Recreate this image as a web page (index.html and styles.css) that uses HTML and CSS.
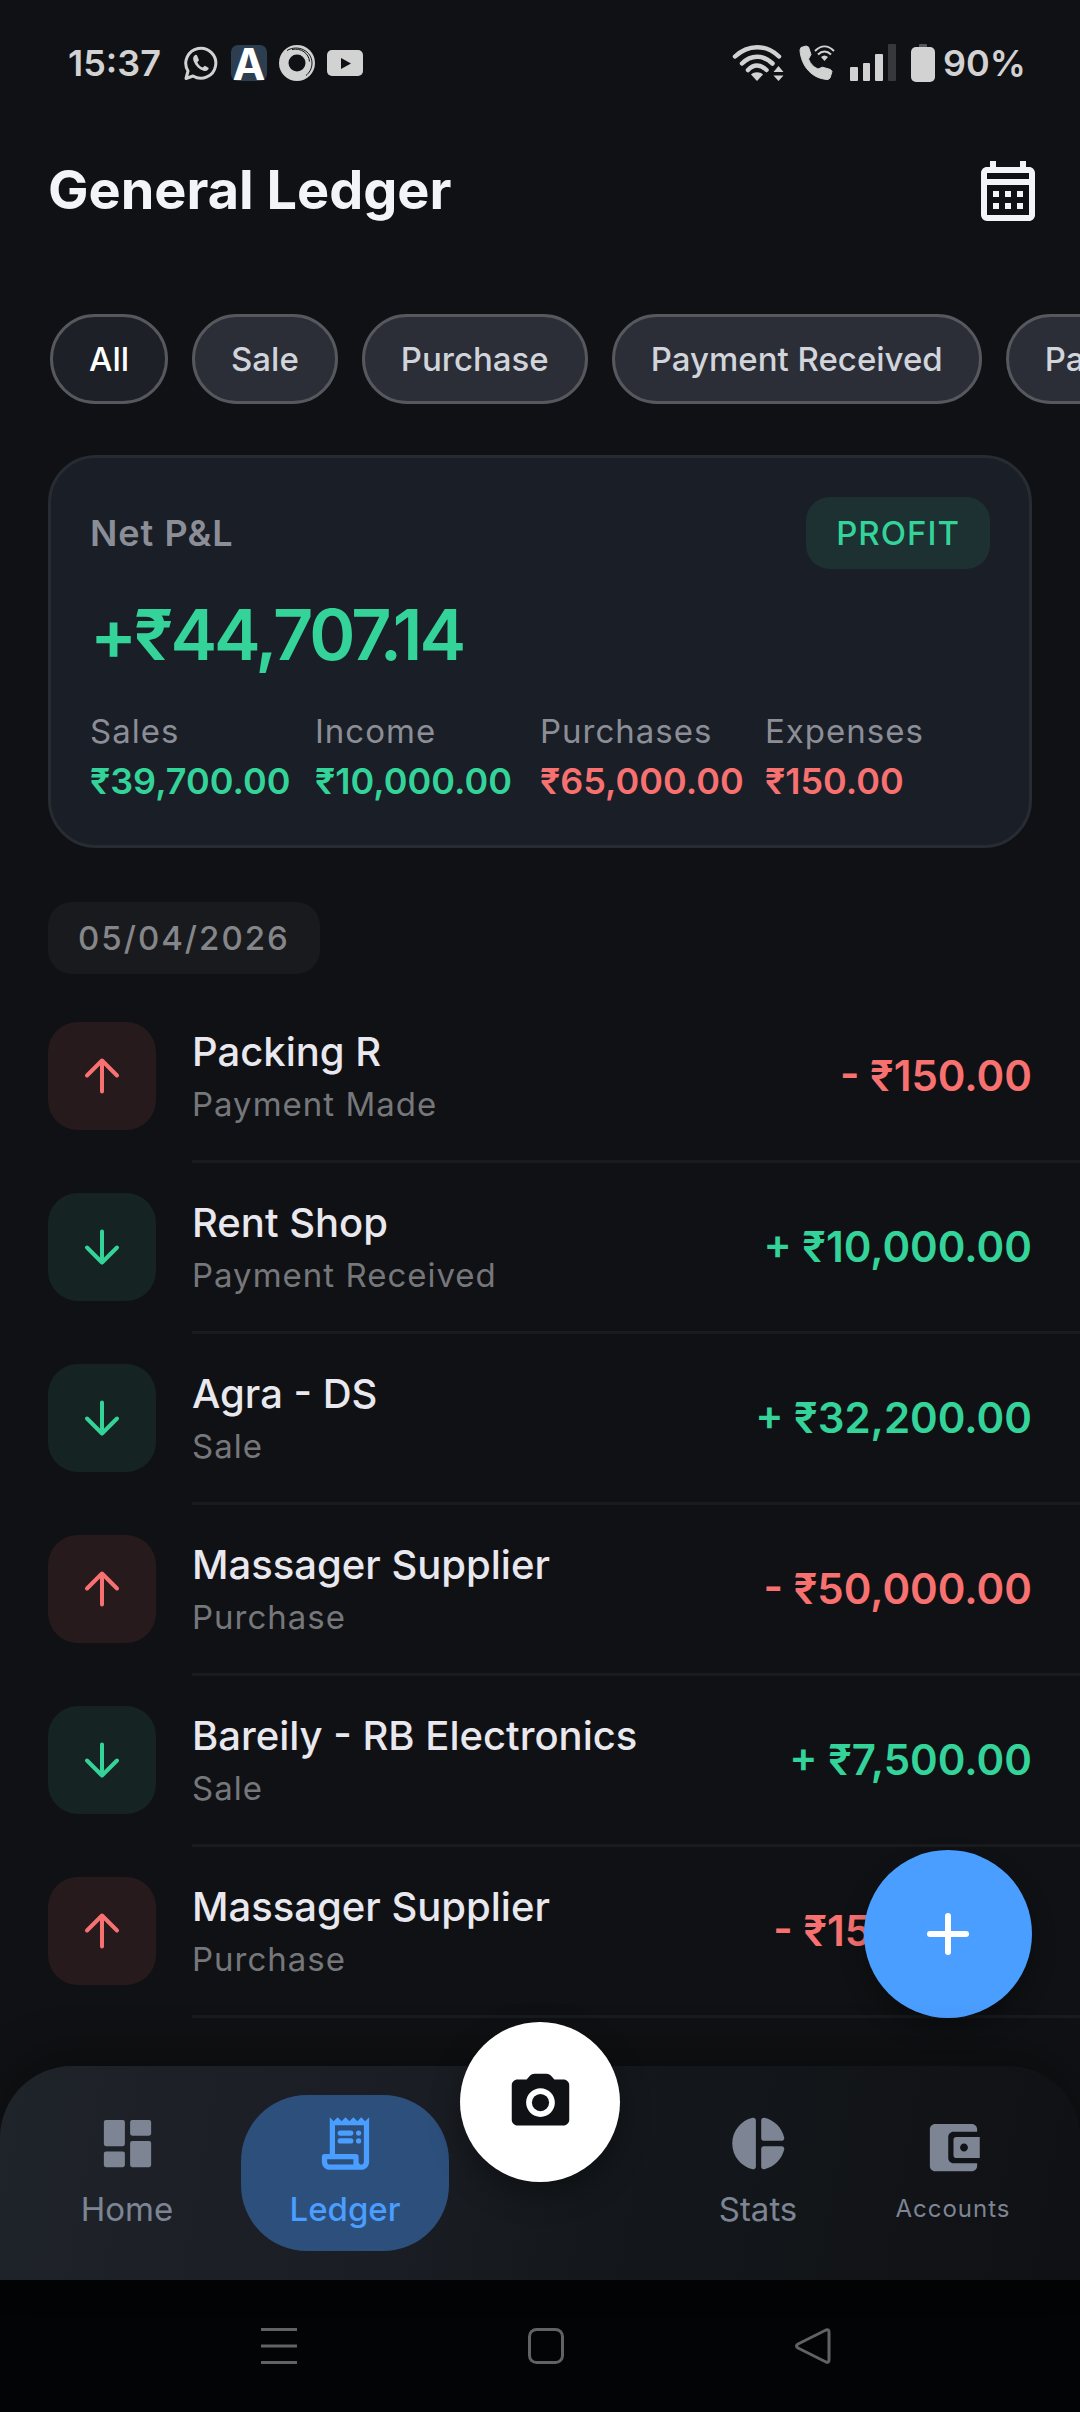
FILE: index.html
```html
<!DOCTYPE html>
<html lang="en">
<head>
<meta charset="utf-8">
<meta name="viewport" content="width=device-width, initial-scale=1">
<title>General Ledger</title>
<link rel="stylesheet" href="styles.css">
</head>
<body>
<svg class="defs" width="0" height="0" aria-hidden="true">
  <symbol id="arrow-up" viewBox="0 0 48 48"><path d="M24 39.500V8.500M9 23.500l15-15 15 15" fill="none" stroke="currentColor" stroke-width="4" stroke-linecap="round" stroke-linejoin="round"/></symbol>
  <symbol id="arrow-down" viewBox="0 0 48 48"><path d="M24 8.500v31M9 24.500l15 15 15-15" fill="none" stroke="currentColor" stroke-width="4" stroke-linecap="round" stroke-linejoin="round"/></symbol>
</svg>
<div class="app">
  <div class="status">
    <span class="clock">15:37</span>
    <div class="status-left">
      <svg width="36" height="36" viewBox="0 0 36 36" fill="none"><path d="M3 33.500l2-7.500A15 15 0 1 1 10 31z" stroke="#d2d2d2" stroke-width="3" stroke-linejoin="round"/><path d="M12.200 10c-2 1.200-2.500 3.400-1.700 5.800 1.800 5 5.200 8.400 10 10 2.600.8 4.700-.3 5.300-2.700l-3.900-2.400-2.300 1.900c-2.400-1-4.200-2.800-5.300-5.300l1.700-2.100-1.800-4.500c-.3-.8-1.200-1.100-2-.7z" fill="#d2d2d2"/></svg>
      <svg class="app-icon" width="36" height="36" viewBox="0 0 36 36"><rect width="36" height="36" rx="7" fill="#2c3e50"/><text class="app-mark" x="18" y="35" text-anchor="middle">A</text></svg>
      <svg width="36" height="36" viewBox="0 0 36 36"><circle cx="18" cy="18" r="18" fill="#d2d2d2"/><circle cx="18" cy="18" r="8.500" fill="#101114"/><path d="M8 5.500C19-1 33 6 33 18c0 6-3 10-6 12.500M13 4.500c9-2 17 4 17.500 12" fill="none" stroke="#101114" stroke-width="1"/></svg>
      <svg width="36" height="26" viewBox="0 0 36 26"><rect width="36" height="26" rx="5" fill="#d2d2d2"/><path d="M14 8v11l10-5.500z" fill="#101114"/></svg>
    </div>
    <div class="status-right">
      <svg width="52" height="38" viewBox="0 0 52 38" fill="none" stroke="#d2d2d2" stroke-width="4.500" stroke-linecap="round"><path d="M3 12.500c13-12.500 31-12.500 44 0M10 19.500c9-9 21-9 30.500 0M16 26c5.500-6 12.500-6 18.500 0"/><path d="M19 30.500c3-3 9-3 12 0L25 37z" fill="#d2d2d2" stroke="none"/><path d="M46.500 22l5 6h-10zM46.500 37l5-5.500h-10z" fill="#d2d2d2" stroke="none"/></svg>
      <svg width="36" height="36" viewBox="0 0 36 36" fill="none"><path d="M2 2.500 7 1l2.500 1L12 9.500 9.500 14c2 5 5 8 9.500 10l4.500-1.800 8 2.300 1.500 2-2 6.500-2 1.500C13 34 2 21 1 5z" fill="#d2d2d2" stroke="#d2d2d2" stroke-linejoin="round"/><path d="M16 6c6-6 13-6 19 0M19 9.500c4-4 9-4 13 0" stroke="#d2d2d2" stroke-width="2"/><path d="M22 12q3.500-3 7 0l-3.500 4z" fill="#d2d2d2"/></svg>
      <svg width="46" height="37" viewBox="0 0 46 37" fill="#d2d2d2"><rect y="23" width="8" height="14" rx="1"/><rect x="13" y="19" width="7" height="18" rx="1"/><rect x="25" y="10" width="8" height="27" rx="1"/><rect x="38" width="8" height="37" rx="1" fill="#37383b"/></svg>
      <div class="battery">
        <svg width="24" height="38" viewBox="0 0 24 38"><path d="M8 3V1q0-1 1-1h6q1 0 1 1v2z" fill="#55565a"/><rect y="3" width="24" height="35" rx="5" fill="#d2d2d2"/></svg>
        <span class="percent">90%</span>
      </div>
    </div>
  </div>

  <header class="header">
    <h1 class="title">General Ledger</h1>
    <button class="icon-button" type="button" aria-label="Calendar">
      <svg width="72" height="72" viewBox="0 0 24 24" fill="currentColor"><path d="M19 4h-1V2h-2v2H8V2H6v2H5c-1.110 0-1.990.9-1.990 2L3 20a2 2 0 0 0 2 2h14c1.100 0 2-.9 2-2V6c0-1.100-.9-2-2-2zm0 16H5V10h14v10zm0-12H5V6h14v2zM9 14H7v-2h2v2zm4 0h-2v-2h2v2zm4 0h-2v-2h2v2zm-8 4H7v-2h2v2zm4 0h-2v-2h2v2zm4 0h-2v-2h2v2z"/></svg>
    </button>
  </header>

  <div class="chips">
    <button class="chip chip-active" type="button">All</button>
    <button class="chip" type="button">Sale</button>
    <button class="chip" type="button">Purchase</button>
    <button class="chip" type="button">Payment Received</button>
    <button class="chip" type="button">Payment Made</button>
  </div>

  <section class="card">
    <div class="card-top">
      <h2 class="card-title">Net P&amp;L</h2>
      <span class="badge">PROFIT</span>
    </div>
    <p class="net gain">+₹44,707.14</p>
    <dl class="totals">
      <div><dt>Sales</dt><dd class="gain">₹39,700.00</dd></div>
      <div><dt>Income</dt><dd class="gain">₹10,000.00</dd></div>
      <div><dt>Purchases</dt><dd class="loss">₹65,000.00</dd></div>
      <div><dt>Expenses</dt><dd class="loss">₹150.00</dd></div>
    </dl>
  </section>

  <main class="ledger">
    <h2 class="date">05/04/2026</h2>
    <ul class="entries">
      <li class="entry"><span class="tile tile-loss"><svg width="48" height="48"><use href="#arrow-up"/></svg></span><div class="entry-body"><div class="entry-text"><span class="name">Packing R</span><span class="kind">Payment Made</span></div><span class="amount loss">- ₹150.00</span></div></li>
      <li class="entry"><span class="tile tile-gain"><svg width="48" height="48"><use href="#arrow-down"/></svg></span><div class="entry-body"><div class="entry-text"><span class="name">Rent Shop</span><span class="kind">Payment Received</span></div><span class="amount gain">+ ₹10,000.00</span></div></li>
      <li class="entry"><span class="tile tile-gain"><svg width="48" height="48"><use href="#arrow-down"/></svg></span><div class="entry-body"><div class="entry-text"><span class="name">Agra - DS</span><span class="kind">Sale</span></div><span class="amount gain">+ ₹32,200.00</span></div></li>
      <li class="entry"><span class="tile tile-loss"><svg width="48" height="48"><use href="#arrow-up"/></svg></span><div class="entry-body"><div class="entry-text"><span class="name">Massager Supplier</span><span class="kind">Purchase</span></div><span class="amount loss">- ₹50,000.00</span></div></li>
      <li class="entry"><span class="tile tile-gain"><svg width="48" height="48"><use href="#arrow-down"/></svg></span><div class="entry-body"><div class="entry-text"><span class="name">Bareily - RB Electronics</span><span class="kind">Sale</span></div><span class="amount gain">+ ₹7,500.00</span></div></li>
      <li class="entry"><span class="tile tile-loss"><svg width="48" height="48"><use href="#arrow-up"/></svg></span><div class="entry-body"><div class="entry-text"><span class="name">Massager Supplier</span><span class="kind">Purchase</span></div><span class="amount loss">- ₹15,000.00</span></div></li>
    </ul>
  </main>

  <div class="bottom">
    <button class="fab" type="button" aria-label="Add entry">
      <svg width="48" height="48" viewBox="0 0 48 48"><path d="M24 6v36M6 24h36" stroke="#fff" stroke-width="6" stroke-linecap="round"/></svg>
    </button>
    <nav class="tabs">
      <a class="tab" href="#home">
        <svg width="63" height="63" viewBox="0 0 24 24" fill="currentColor"><rect x="3" y="3" width="8" height="10" rx=".8"/><rect x="13" y="3" width="8" height="6" rx=".8"/><rect x="3" y="15" width="8" height="6" rx=".8"/><rect x="13" y="11" width="8" height="10" rx=".8"/></svg>
        <span>Home</span>
      </a>
      <a class="tab tab-active" href="#ledger" aria-current="page">
        <svg width="63" height="63" viewBox="0 0 24 24" fill="currentColor"><path d="M19.500 3.500 18 2l-1.500 1.500L15 2l-1.500 1.500L12 2l-1.500 1.500L9 2 7.500 3.500 6 2v14H4c-.55 0-1 .45-1 1v2c0 1.660 1.340 3 3 3h12c1.660 0 3-1.340 3-3V2l-1.500 1.500zM15 20H6c-.55 0-1-.45-1-1v-1h10v2zm4-1c0 .55-.45 1-1 1s-1-.45-1-1v-2c0-.55-.45-1-1-1H8V5h11v14z"/><rect x="9" y="7" width="6" height="2" rx="1"/><rect x="9" y="10" width="6" height="2" rx="1"/><circle cx="17" cy="8" r="1"/><circle cx="17" cy="11" r="1"/></svg>
        <span>Ledger</span>
      </a>
      <a class="tab tab-stats" href="#stats">
        <svg width="63" height="63" viewBox="0 0 24 24" fill="currentColor"><path d="M11 3.180v17.640c0 .64-.59 1.120-1.210.98C5.320 20.800 2 16.790 2 12s3.320-8.800 7.790-9.800c.62-.14 1.210.34 1.210.98zm2.030 0v6.810c0 .55.45 1 1 1h6.790c.64 0 1.120-.59.98-1.220-.85-3.760-3.800-6.720-7.550-7.570-.63-.14-1.220.34-1.220.98zm0 10.830v6.810c0 .64.590 1.120 1.220.98 3.760-.85 6.710-3.820 7.560-7.580.14-.62-.35-1.220-.98-1.220h-6.790c-.56.010-1.010.460-1.010 1.010z"/></svg>
        <span>Stats</span>
      </a>
      <a class="tab tab-small" href="#accounts">
        <svg width="63" height="63" viewBox="0 0 24 24" fill="currentColor"><path d="M10 16V8c0-1.100.89-2 2-2h9V5c0-1.100-.9-2-2-2H5c-1.110 0-2 .9-2 2v14c0 1.100.890 2 2 2h14c1.100 0 2-.9 2-2v-1h-9c-1.110 0-2-.9-2-2zm3-8c-.55 0-1 .45-1 1v6c0 .55.450 1 1 1h9V8h-9zm3 5.500c-.83 0-1.500-.67-1.500-1.500s.67-1.500 1.500-1.500 1.500.67 1.500 1.500-.67 1.500-1.500 1.500z"/></svg>
        <span>Accounts</span>
      </a>
      <button class="camera" type="button" aria-label="Scan">
        <svg width="69" height="69" viewBox="0 0 24 24" fill="currentColor"><circle cx="12" cy="12" r="3"/><path d="M20 4h-3.170l-1.240-1.350A1.990 1.990 0 0 0 14.120 2H9.880c-.56 0-1.100.24-1.480.65L7.170 4H4c-1.100 0-2 .9-2 2v12c0 1.100.9 2 2 2h16c1.100 0 2-.9 2-2V6c0-1.100-.9-2-2-2zm-8 13c-2.760 0-5-2.240-5-5s2.240-5 5-5 5 2.240 5 5-2.240 5-5 5z"/></svg>
      </button>
    </nav>
    <div class="system">
      <button type="button" aria-label="Recent apps"><svg width="36" height="36" viewBox="0 0 36 36"><path d="M0 1.500h36M0 18h36M0 34.500h36" stroke="currentColor" stroke-width="3"/></svg></button>
      <button type="button" aria-label="Home screen"><svg width="36" height="36" viewBox="0 0 36 36"><rect x="1.500" y="1.500" width="33" height="33" rx="7" fill="none" stroke="currentColor" stroke-width="3"/></svg></button>
      <button type="button" aria-label="Back"><svg width="36" height="36" viewBox="0 0 36 36"><path d="M3 16Q0 18 3 20L31 34q3 1 3-2V4q0-3-3-2z" fill="none" stroke="currentColor" stroke-width="3" stroke-linejoin="round"/></svg></button>
    </div>
  </div>
</div>
</body>
</html>
```
FILE: styles.css
```css
:root {
  --bg: #101114;
  --gain: #34d399;
  --loss: #f87171;
  --status: #d2d2d2;
}

* { box-sizing: border-box; }

body {
  margin: 0;
  background: var(--bg);
  color: #f3f4f8;
  font-family: Inter, Roboto, sans-serif;
  font-size: 33px;
  line-height: 40px;
}

h1, h2, p, ul, dl, dd { margin: 0; padding: 0; font-size: inherit; font-weight: inherit; }
ul { list-style: none; }
button { font: inherit; color: inherit; border: 0; padding: 0; background: none; }
a { color: inherit; text-decoration: none; }
svg { display: block; flex: none; }
.defs { position: absolute; }

.app {
  display: flex;
  flex-direction: column;
  min-height: 100vh;
  overflow: hidden;
}

.gain { color: var(--gain); }
.loss { color: var(--loss); }

/* Status bar */
.status {
  display: flex;
  align-items: center;
  height: 125px;
  padding: 0 54px 0 68px;
  color: var(--status);
}
.clock { font-size: 36px; font-weight: 600; }
.status-left { display: flex; align-items: center; gap: 12px; margin-left: 22px; }
.app-icon { overflow: visible; }
.app-mark { fill: #fff; font-size: 44px; font-weight: 700; }
.status-right { display: flex; align-items: center; gap: 15px; margin-left: auto; }
.battery { display: flex; align-items: center; gap: 8px; }
.percent { font-size: 36px; font-weight: 600; }

/* Header */
.header {
  display: flex;
  align-items: center;
  justify-content: space-between;
  height: 132px;
  padding: 0 36px 0 48px;
}
.title { padding-bottom: 3px; font-size: 54px; font-weight: 700; line-height: 64px; }

/* Filter chips */
.chips {
  display: flex;
  gap: 24px;
  padding: 57px 0 51px 50px;
  overflow: hidden;
}
.chip {
  flex: none;
  height: 90px;
  padding: 0 36px;
  border: 3px solid #56585e;
  border-radius: 45px;
  background: #2b2e36;
  color: #d1d5db;
  font-weight: 500;
}
.chip-active { background: #1d2127; color: #fff; }

/* Profit and loss card */
.card {
  margin: 0 48px;
  padding: 39px 39px 42px;
  border: 3px solid #272b32;
  border-radius: 48px;
  background: #1a1e26;
}
.card-top { display: flex; align-items: center; justify-content: space-between; }
.card-title { color: #8b8e96; font-size: 36px; font-weight: 600; letter-spacing: 1px; }
.badge {
  padding: 16px 30px;
  border-radius: 24px;
  background: #1d3032;
  color: var(--gain);
  font-weight: 500;
  letter-spacing: 1px;
}
.net { margin-top: 24px; font-size: 70px; font-weight: 600; line-height: 84px; letter-spacing: -3px; }
.totals { display: grid; grid-template-columns: repeat(4, 1fr); margin-top: 34px; }
.totals dt { color: #8b8e96; letter-spacing: 1px; }
.totals dd { margin-top: 8px; font-size: 36px; font-weight: 600; line-height: 44px; }

/* Ledger entries */
.ledger { padding: 54px 0 48px 48px; }
.date {
  width: fit-content;
  padding: 16px 30px;
  border-radius: 24px;
  background: #191a1d;
  color: #85868a;
  font-weight: 500;
  letter-spacing: 2px;
}
.entries { margin-top: 18px; }
.entry { display: flex; align-items: center; gap: 36px; }
.tile {
  display: grid;
  place-items: center;
  flex: none;
  width: 108px;
  height: 108px;
  margin-bottom: 3px;
  border-radius: 30px;
}
.tile-loss { background: #261a1d; color: var(--loss); }
.tile-gain { background: #152422; color: var(--gain); }
.entry-body {
  display: flex;
  flex: 1;
  align-items: center;
  justify-content: space-between;
  height: 171px;
  padding-right: 48px;
  border-bottom: 3px solid #1a1b1f;
}
.entry-text { display: flex; flex-direction: column; gap: 8px; }
.name { color: #e8e8ee; font-size: 40px; font-weight: 500; line-height: 48px; }
.kind { color: #76777b; letter-spacing: 1px; }
.amount { font-size: 42px; font-weight: 600; line-height: 48px; }

/* Bottom navigation */
.bottom { position: relative; margin-top: auto; }
.fab {
  position: absolute;
  right: 48px;
  bottom: calc(100% + 48px);
  display: grid;
  place-items: center;
  width: 168px;
  height: 168px;
  border-radius: 50%;
  background: #4a9eff;
  box-shadow: 0 12px 24px rgba(0, 0, 0, .3);
}
.tabs {
  position: relative;
  display: grid;
  grid-template-columns: minmax(0, 218fr) minmax(0, 218fr) minmax(0, 208fr) minmax(0, 192fr) minmax(0, 198fr);
  justify-items: center;
  align-items: center;
  height: 214px;
  padding: 0 28px 0 18px;
  border-radius: 72px 72px 0 0;
  background: linear-gradient(100deg, #1f242a 0%, #1a1d23 38%, #14181c 55%, #101114 100%);
  box-shadow: 0 -12px 48px rgba(0, 0, 0, .3);
  color: #7d8594;
}
.tab {
  display: flex;
  flex-direction: column;
  align-items: center;
  justify-content: center;
  gap: 14px;
  width: 100%;
  max-width: 208px;
  height: 156px;
  padding-bottom: 5px;
  border-radius: 66px;
}
.tab-active { background: #2d4f7c; color: #4a9eff; font-weight: 500; }
.tab-stats { grid-column: 4; }
.tab-small { font-size: 24px; line-height: 32px; letter-spacing: 1px; }
.camera {
  position: absolute;
  left: calc(50% - 80px);
  top: -44px;
  display: grid;
  place-items: center;
  width: 160px;
  height: 160px;
  border-radius: 50%;
  background: #fff;
  color: #101114;
  box-shadow: 0 12px 30px rgba(0, 0, 0, .35);
}

/* System navigation */
.system {
  display: flex;
  align-items: center;
  justify-content: center;
  gap: 231px;
  height: 132px;
  padding-left: 12px;
  background: #030405;
  color: #626262;
}
```
